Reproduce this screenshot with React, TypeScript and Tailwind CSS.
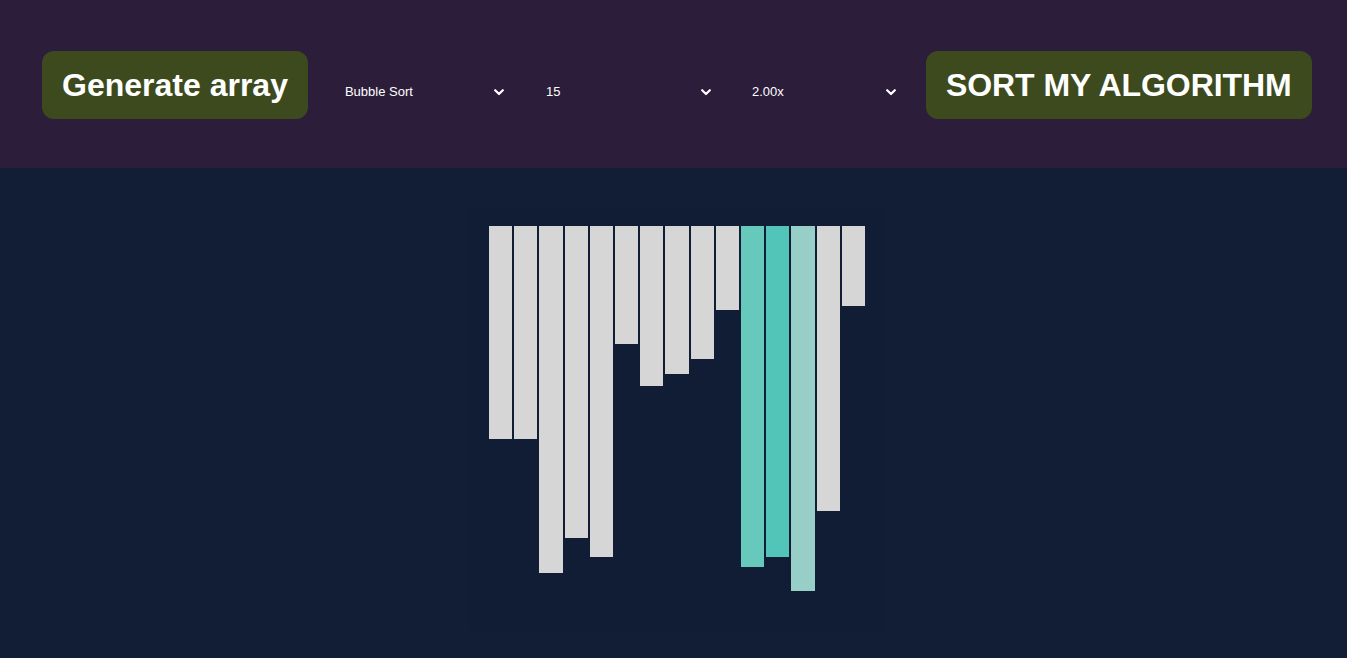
import React from "react";

const bars: { h: number; c: string }[] = [
  { h: 213, c: "#d6d6d6" },
  { h: 213, c: "#d6d6d6" },
  { h: 347, c: "#d6d6d6" },
  { h: 312, c: "#d6d6d6" },
  { h: 331, c: "#d6d6d6" },
  { h: 118, c: "#d6d6d6" },
  { h: 160, c: "#d6d6d6" },
  { h: 148, c: "#d6d6d6" },
  { h: 133, c: "#d6d6d6" },
  { h: 84, c: "#d6d6d6" },
  { h: 341, c: "#67c9bb" },
  { h: 331, c: "#52c4b8" },
  { h: 365, c: "#97cfc8" },
  { h: 285, c: "#d6d6d6" },
  { h: 80, c: "#d6d6d6" },
];

function Chevron() {
  return (
    <svg width="10" height="7" viewBox="0 0 10 7" className="shrink-0">
      <polyline
        points="1.2,1.2 5,5 8.8,1.2"
        fill="none"
        stroke="#ffffff"
        strokeWidth="2.2"
        strokeLinecap="round"
        strokeLinejoin="round"
      />
    </svg>
  );
}

function FakeSelect({ label, w, pr }: { label: string; w: string; pr: string }) {
  return (
    <div className={`flex h-[36px] items-center justify-between pl-[10px] ${w} ${pr}`}>
      <span className="text-[13px] text-white">{label}</span>
      <Chevron />
    </div>
  );
}

export default function App() {
  return (
    <div
      className="min-h-[658px] w-full bg-[#121e36]"
      style={{ fontFamily: '"Liberation Sans", Arial, sans-serif' }}
    >
      <header className="flex h-[168px] items-start bg-[#2c1d3b] pl-[42px] pt-[51px]">
        <button className="flex h-[68px] items-center rounded-[12px] bg-[#3d4a1d] px-[20px] text-[32px] font-bold leading-[32px] text-white">
          Generate array
        </button>
        <div className="ml-[27px] mt-[23px] flex items-center">
          <FakeSelect label="Bubble Sort" w="w-[180px]" pr="pr-[11px]" />
          <div className="ml-[21px]">
            <FakeSelect label="15" w="w-[185px]" pr="pr-[10px]" />
          </div>
          <div className="ml-[21px]">
            <FakeSelect label="2.00x" w="w-[164px]" pr="pr-[10px]" />
          </div>
        </div>
        <button className="ml-[20px] flex h-[68px] items-center rounded-[12px] bg-[#3d4a1d] px-[20px] text-[32px] font-bold leading-[32px] tracking-[-0.05px] text-white">
          SORT MY ALGORITHM
        </button>
      </header>
      <main className="flex justify-center pl-[6px] pt-[42px]">
        <div className="h-[419px] w-[411px] bg-[#111d35] pl-[18px] pt-[16px] shadow-[0_0_2px_rgba(0,0,0,0.1)]">
          <div className="flex w-[376px] items-start gap-[2px]">
            {bars.map((b, i) => (
              <div
                key={i}
                className="flex-1"
                style={{ height: b.h, backgroundColor: b.c }}
              />
            ))}
          </div>
        </div>
      </main>
    </div>
  );
}
